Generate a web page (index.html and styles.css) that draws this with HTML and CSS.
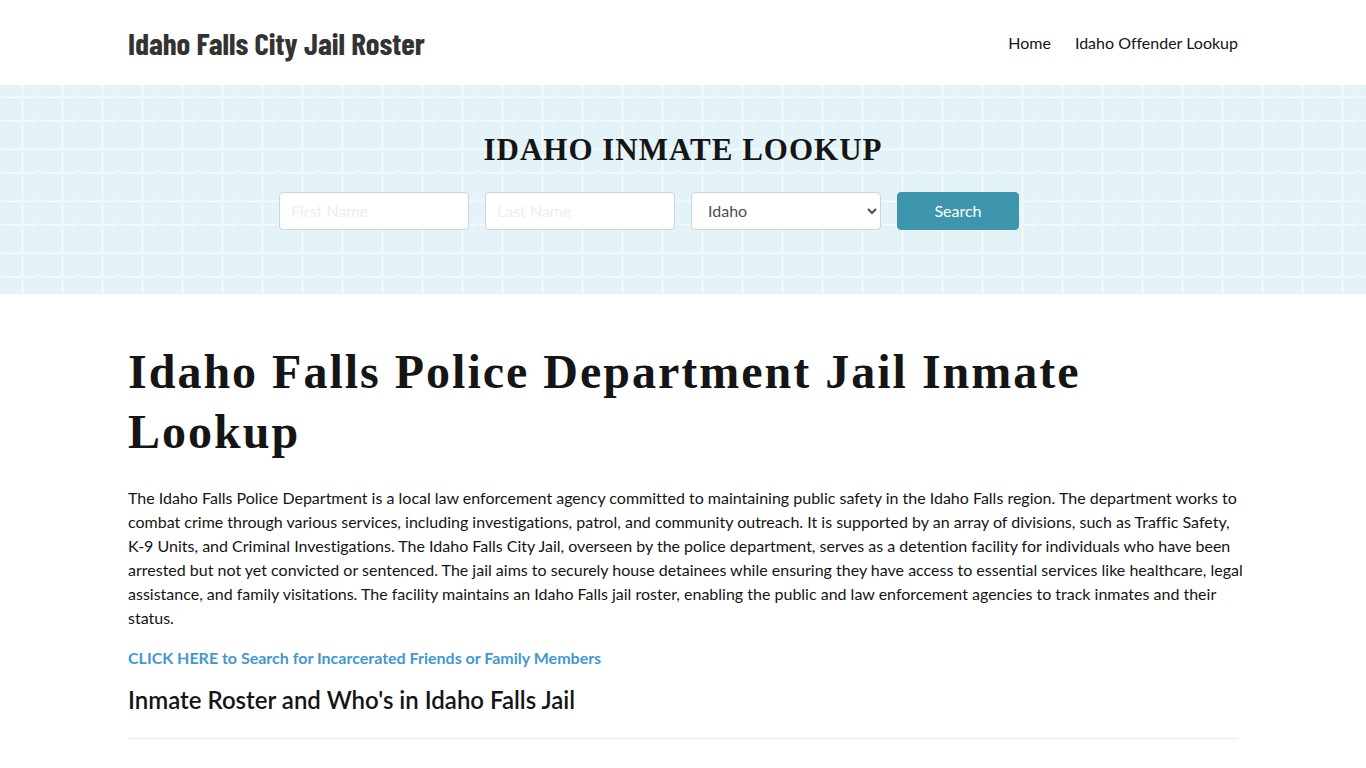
FILE: index.html
```html
<!DOCTYPE html>
<html lang="en">
<head>
  <meta charset="UTF-8">
  <meta name="viewport" content="width=device-width, initial-scale=1.0">
  <title>Idaho Falls City Jail Roster</title>
  <link rel="stylesheet" href="styles.css">
</head>
<body>
  <header class="site-header">
    <div class="container header-inner">
      <a class="brand" href="#">Idaho Falls City Jail Roster</a>
      <nav class="main-nav">
        <a href="#">Home</a>
        <a href="#">Idaho Offender Lookup</a>
      </nav>
    </div>
  </header>

  <section class="search-section">
    <div class="container">
      <h2>Idaho Inmate Lookup</h2>
      <form class="search-form">
        <input class="form-control" type="text" name="fname" placeholder="First Name" aria-label="First Name">
        <input class="form-control" type="text" name="lname" placeholder="Last Name" aria-label="Last Name">
        <select class="form-control" name="state" aria-label="State">
          <option>Idaho</option>
        </select>
        <button class="btn" type="submit">Search</button>
      </form>
    </div>
  </section>

  <main class="container content">
    <h1>Idaho Falls Police Department Jail Inmate Lookup</h1>
    <p class="intro">The Idaho Falls Police Department is a local law enforcement agency committed to maintaining public safety in the Idaho Falls region. The department works to combat crime through various services, including investigations, patrol, and community outreach. It is supported by an array of divisions, such as Traffic Safety, K-9 Units, and Criminal Investigations. The Idaho Falls City Jail, overseen by the police department, serves as a detention facility for individuals who have been arrested but not yet convicted or sentenced. The jail aims to securely house detainees while ensuring they have access to essential services like healthcare, legal assistance, and family visitations. The facility maintains an Idaho Falls jail roster, enabling the public and law enforcement agencies to track inmates and their status.</p>
    <p><a class="search-link" href="#">CLICK HERE to Search for Incarcerated Friends or Family Members</a></p>
    <h3>Inmate Roster and Who's in Idaho Falls Jail</h3>
    <hr>
  </main>
</body>
</html>
```

FILE: styles.css
```css
* {
  box-sizing: border-box;
}
body {
  margin: 0;
  font-family: Lato, "Liberation Sans", sans-serif;
  font-size: 16px;
  line-height: 24px;
  font-variant-ligatures: no-common-ligatures;
  color: #151515;
  background: #fff;
}
.container {
  max-width: 1140px;
  margin: 0 auto;
  padding: 0 15px;
}

/* header */
.header-inner {
  display: flex;
  align-items: center;
  justify-content: space-between;
  min-height: 85px;
}
.brand {
  font-family: "Barlow Condensed", "Liberation Sans Narrow", "Roboto", sans-serif;
  font-size: 31px;
  font-weight: 700;
  line-height: 45px;
  color: #333;
  text-decoration: none;
}
.main-nav {
  display: flex;
  gap: 24px;
}
.main-nav a {
  color: #151515;
  text-decoration: none;
}

/* search */
.search-section {
  padding: 43px 0 64px;
  background-color: #e3f3f7;
  background-image: url("data:image/svg+xml,%3Csvg xmlns='http://www.w3.org/2000/svg' width='40' height='52' fill='none' stroke='%23fff'%3E%3Cpath stroke-opacity='.8' stroke-width='1.4' d='M22.5 0V10M22.5 15V34M22.5 38V52M25 12.500H35M3 12.500H19M25 36H35M3 36H19'/%3E%3Cpath stroke-opacity='.65' stroke-width='1.4' d='M19 13.500L25 10.500M19 37L25 34.500M36 12L41 10.500M-1 11.500L2 12M36 35.500L41 34M-1 35L2 35.500'/%3E%3C/svg%3E");
}
.search-section h2 {
  margin: 0 0 21px;
  font-family: Georgia, "Liberation Serif", serif;
  font-size: 31px;
  font-weight: 700;
  line-height: 43px;
  letter-spacing: 1px;
  text-align: center;
  text-transform: uppercase;
}
.search-form {
  display: grid;
  grid-template-columns: repeat(3, 190px) 122px;
  gap: 16px;
  max-width: 808px;
  margin: 0 auto;
}
.form-control {
  width: 100%;
  height: 38px;
  padding: 5px 11px 7px;
  border: 1px solid #ced4da;
  border-radius: 4px;
  background-color: #fff;
  color: #495057;
  font: inherit;
}
select.form-control {
  padding: 5px 12px 7px;
}
.form-control::placeholder {
  color: #eceeef;
  opacity: 1;
}
.btn {
  height: 38px;
  padding: 6px 12px;
  border: 1px solid #3e95ae;
  border-radius: 4px;
  background: #3e95ae;
  color: #fff;
  font: inherit;
  cursor: pointer;
}

/* content */
.content {
  padding-top: 48px;
  padding-bottom: 48px;
}
.content h1 {
  margin: 0 0 24px;
  font-family: Georgia, "Liberation Serif", serif;
  font-size: 48px;
  font-weight: 700;
  line-height: 60px;
  letter-spacing: 2px;
}
.content p {
  margin: 0 0 16px;
}
.content .intro {
  margin-right: -6px;
}
.search-link {
  color: #4298d1;
  font-weight: 700;
  text-decoration: none;
}
.content h3 {
  margin: 0 0 24px;
  font-size: 24px;
  font-weight: 600;
  line-height: 28px;
}
.content hr {
  margin: 0;
  border: 0;
  border-top: 1px solid #ebebeb;
}

@media (max-width: 820px) {
  .header-inner {
    flex-wrap: wrap;
  }
  .search-form {
    grid-template-columns: 1fr;
  }
  .content .intro {
    margin-right: 0;
  }
}
```
